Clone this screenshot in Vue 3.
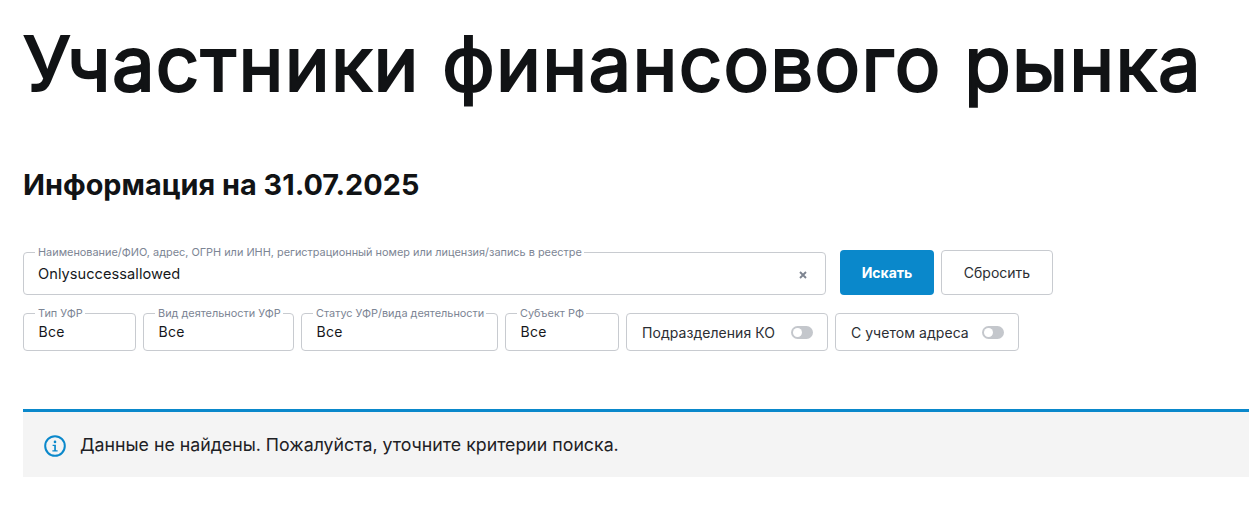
<script setup>
const filters = [
  { label: 'Тип УФР', width: '113px' },
  { label: 'Вид деятельности УФР', width: '151px' },
  { label: 'Статус УФР/вида деятельности', width: '197px' },
  { label: 'Субъект РФ', width: '114px' },
]
const toggles = [
  { label: 'Подразделения КО', width: '202px' },
  { label: 'С учетом адреса', width: '184px' },
]
</script>

<template>
  <main class="page">
    <h1 class="title">Участники финансового рынка</h1>
    <h2 class="subtitle">Информация на 31.07.2025</h2>

    <div class="search-row">
      <fieldset class="field main-field">
        <legend>Наименование/ФИО, адрес, ОГРН или ИНН, регистрационный номер или лицензия/запись в реестре</legend>
        <span class="value main-value">Onlysuccessallowed</span>
        <svg class="clear" width="8" height="8" viewBox="0 0 8 8" aria-hidden="true">
          <path d="M1 1l6 6M7 1L1 7" stroke="#7d8490" stroke-width="1.9" fill="none" />
        </svg>
      </fieldset>
      <button class="btn primary" type="button">Искать</button>
      <button class="btn secondary" type="button">Сбросить</button>
    </div>

    <div class="filter-row">
      <fieldset v-for="f in filters" :key="f.label" class="field small-field" :style="{ width: f.width }">
        <legend>{{ f.label }}</legend>
        <span class="value small-value">Все</span>
      </fieldset>
      <div v-for="t in toggles" :key="t.label" class="toggle-box" :style="{ width: t.width }">
        <span>{{ t.label }}</span>
        <span class="switch"><span class="knob"></span></span>
      </div>
    </div>

    <div class="notice">
      <svg class="notice-icon" width="22" height="22" viewBox="0 0 22 22" aria-hidden="true">
        <circle cx="11" cy="11" r="9.8" fill="none" stroke="#0a88cb" stroke-width="2" />
        <circle cx="11" cy="6.9" r="1.3" fill="#0a88cb" />
        <path d="M8.6 9.7h3.3v5.6h1.7v1.3H8.4v-1.3h1.8v-4.3H8.6z" fill="#0a88cb" />
      </svg>
      <span>Данные не найдены. Пожалуйста, уточните критерии поиска.</span>
    </div>
  </main>
</template>

<style scoped>
.page {
  padding: 0 0 46px 23px;
  font-family: Inter, "Noto Sans", sans-serif;
  color: #16181b;
}
.title {
  margin: 0;
  padding-top: 13px;
  font-size: 76px;
  line-height: 100px;
  font-weight: 400;
  letter-spacing: 1.3px;
  -webkit-text-stroke: 2.2px #111315;
  color: #111315;
  white-space: nowrap;
}
.subtitle {
  margin: 0;
  padding-top: 54px;
  font-size: 28.85px;
  line-height: 36px;
  font-weight: 700;
  color: #111315;
}
.search-row {
  display: flex;
  align-items: flex-end;
  margin-top: 44px;
}
.field {
  box-sizing: border-box;
  margin: 0;
  border: 1px solid #c8cbd0;
  border-radius: 4px;
  min-width: 0;
}
.field legend {
  margin-left: -3px;
  padding: 0 2px 0 3px;
  font-size: 10.9px;
  line-height: 11px;
  color: #7c8594;
  white-space: nowrap;
}
.main-field {
  position: relative;
  width: 803px;
  height: 48px;
  padding: 6px 14px 0;
}
.value {
  display: block;
  font-size: 14px;
  line-height: 20px;
  letter-spacing: 0.2px;
  color: #16181b;
}
.main-value {
  font-size: 14.6px;
  letter-spacing: 0.05px;
}
.small-value {
  padding-left: 0.6px;
}
.clear {
  position: absolute;
  right: 18px;
  top: 13px;
}
.btn {
  box-sizing: border-box;
  height: 45px;
  border-radius: 4px;
  font-family: inherit;
  font-size: 14px;
}
.primary {
  width: 94px;
  margin-left: 14px;
  background: #0a88cb;
  border: none;
  color: #fff;
  font-weight: 700;
}
.secondary {
  width: 112px;
  margin-left: 7px;
  background: #fff;
  border: 1px solid #c8cbd0;
  color: #2b2e33;
}
.filter-row {
  display: flex;
  align-items: flex-end;
  gap: 7px;
  margin-top: 13px;
}
.small-field {
  height: 43px;
  padding: 3px 14px 0;
}
.toggle-box {
  box-sizing: border-box;
  height: 38px;
  padding: 0 14px 0 15px;
  display: flex;
  align-items: center;
  justify-content: space-between;
  border: 1px solid #c8cbd0;
  border-radius: 4px;
  font-size: 14px;
  letter-spacing: 0.05px;
  color: #2b2e33;
}
.switch {
  display: block;
  width: 22px;
  height: 13px;
  border-radius: 7px;
  background: #c4c7cc;
  position: relative;
}
.knob {
  position: absolute;
  left: 2px;
  top: 2px;
  width: 9px;
  height: 9px;
  border-radius: 50%;
  background: #fff;
}
.notice {
  box-sizing: border-box;
  margin-top: 58px;
  height: 68px;
  border-top: 3px solid #0a88cb;
  background: #f4f4f4;
  padding: 0 0 0 21px;
  display: flex;
  align-items: center;
  gap: 14px;
  font-size: 17.75px;
  color: #1e2125;
}
.notice-icon {
  flex: none;
  margin-top: 3px;
}
</style>

<style>
html, body { background: #fff; margin: 0; }
</style>
